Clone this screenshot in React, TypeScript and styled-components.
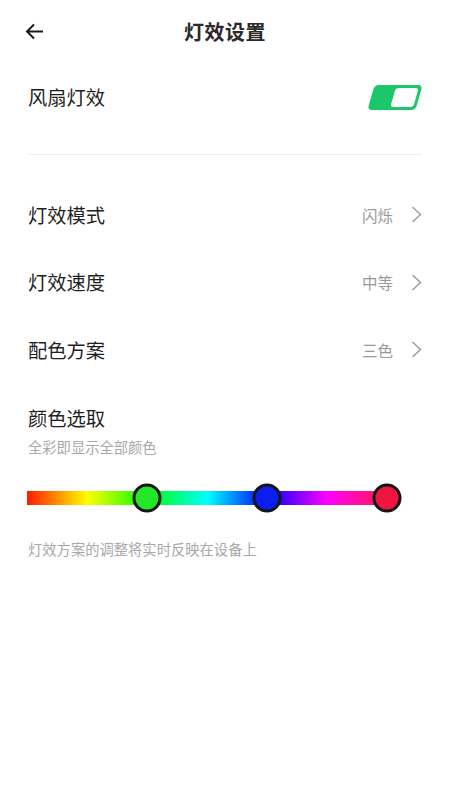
import React from 'react'
import styled, { createGlobalStyle } from 'styled-components'

const GlobalStyle = createGlobalStyle`
  html, body {
    margin: 0;
    padding: 0;
    background: #fff;
  }
  body {
    font-family: "Noto Sans CJK SC", "Noto Sans", sans-serif;
    color: #222;
  }
`

const Page = styled.div`
  width: 450px;
  min-height: 800px;
  box-sizing: border-box;
  padding: 0 28px;
  background: #fff;
`

const Header = styled.div`
  height: 62px;
  display: grid;
  grid-template-columns: 40px 1fr 40px;
  align-items: center;
`

const BackButton = styled.button`
  border: 0;
  background: none;
  padding: 0;
  margin-left: -9px;
  width: 30px;
  height: 30px;
  display: flex;
  align-items: center;
  justify-content: center;
  cursor: pointer;
`

const Title = styled.h1`
  margin: 0;
  text-align: center;
  font-size: 20px;
  font-weight: 700;
  color: #2a2a2a;
  letter-spacing: 0.5px;
`

const ToggleRow = styled.div`
  height: 70px;
  display: flex;
  align-items: center;
  justify-content: space-between;
`

const Label = styled.span`
  font-size: 19.3px;
  color: #1f1f1f;
`

const Toggle = styled.div<{ on: boolean }>`
  width: 42px;
  height: 19px;
  margin-right: 3px;
  transform: skewX(-16deg);
  border: 2px solid #1cc66a;
  border-radius: 4px;
  background: ${p => (p.on ? '#1cc66a' : '#fff')};
  display: flex;
  justify-content: ${p => (p.on ? 'flex-end' : 'flex-start')};
  padding: 1px;
  box-sizing: content-box;
`

const Knob = styled.div`
  width: 23px;
  height: 100%;
  background: #fff;
  border-radius: 3px;
`

const Divider = styled.div`
  height: 1px;
  background: #eeeeee;
  margin: 22px 0 26px;
`

const MenuRow = styled.div`
  height: 67.5px;
  display: flex;
  align-items: center;
  justify-content: space-between;
`

const Value = styled.span`
  display: flex;
  align-items: center;
  gap: 18px;
  font-size: 15.5px;
  color: #9a9a9a;
`

const SectionTitle = styled.div`
  margin-top: 20px;
  font-size: 19.3px;
  line-height: 28px;
  color: #1f1f1f;
`

const Hint = styled.div<{ gap?: number }>`
  margin-top: ${p => p.gap ?? 5}px;
  font-size: 14.3px;
  line-height: 20px;
  color: #a8a8a8;
`

const Slider = styled.div`
  position: relative;
  margin: 26px 0 0 -1px;
  width: 360px;
  height: 30px;
  display: flex;
  align-items: center;
`

const Track = styled.div`
  width: 100%;
  height: 14px;
  background: linear-gradient(
    to right,
    #ff1a00 0%,
    #ffff00 16.7%,
    #00ff00 33.3%,
    #00ffff 50%,
    #0000ff 66.7%,
    #ff00ff 83.3%,
    #ff1a4a 100%
  );
`

const Thumb = styled.div<{ color: string }>`
  position: absolute;
  top: 50%;
  width: 23px;
  height: 23px;
  border: 3px solid #151515;
  border-radius: 50%;
  background: ${p => p.color};
  transform: translate(-50%, -50%);
`

const Chevron = () => (
  <svg width="11" height="17" viewBox="0 0 11 17" fill="none">
    <path d="M1.5 1 L9.5 8.5 L1.5 16" stroke="#9a9a9a" strokeWidth="1.4" />
  </svg>
)

const BackArrow = () => (
  <svg width="19" height="17" viewBox="0 0 19 17" fill="none">
    <path d="M18 8.5 H2 M9 1.5 L2 8.5 L9 15.5" stroke="#1a1a1a" strokeWidth="2" />
  </svg>
)

const menu = [
  { label: '灯效模式', value: '闪烁' },
  { label: '灯效速度', value: '中等' },
  { label: '配色方案', value: '三色' },
]

const thumbs = [
  { pos: 120, color: '#22e626' },
  { pos: 240, color: '#0a1ef0' },
  { pos: 360, color: '#ee1640' },
]

export default function App() {
  return (
    <>
      <GlobalStyle />
      <Page>
        <Header>
          <BackButton aria-label="返回">
            <BackArrow />
          </BackButton>
          <Title>灯效设置</Title>
          <span />
        </Header>

        <ToggleRow>
          <Label>风扇灯效</Label>
          <Toggle on>
            <Knob />
          </Toggle>
        </ToggleRow>

        <Divider />

        {menu.map(item => (
          <MenuRow key={item.label}>
            <Label>{item.label}</Label>
            <Value>
              {item.value}
              <Chevron />
            </Value>
          </MenuRow>
        ))}

        <SectionTitle>颜色选取</SectionTitle>
        <Hint>全彩即显示全部颜色</Hint>

        <Slider>
          <Track />
          {thumbs.map(t => (
            <Thumb key={t.pos} color={t.color} style={{ left: `${(t.pos / 360) * 100}%` }} />
          ))}
        </Slider>

        <Hint gap={26}>灯效方案的调整将实时反映在设备上</Hint>
      </Page>
    </>
  )
}
